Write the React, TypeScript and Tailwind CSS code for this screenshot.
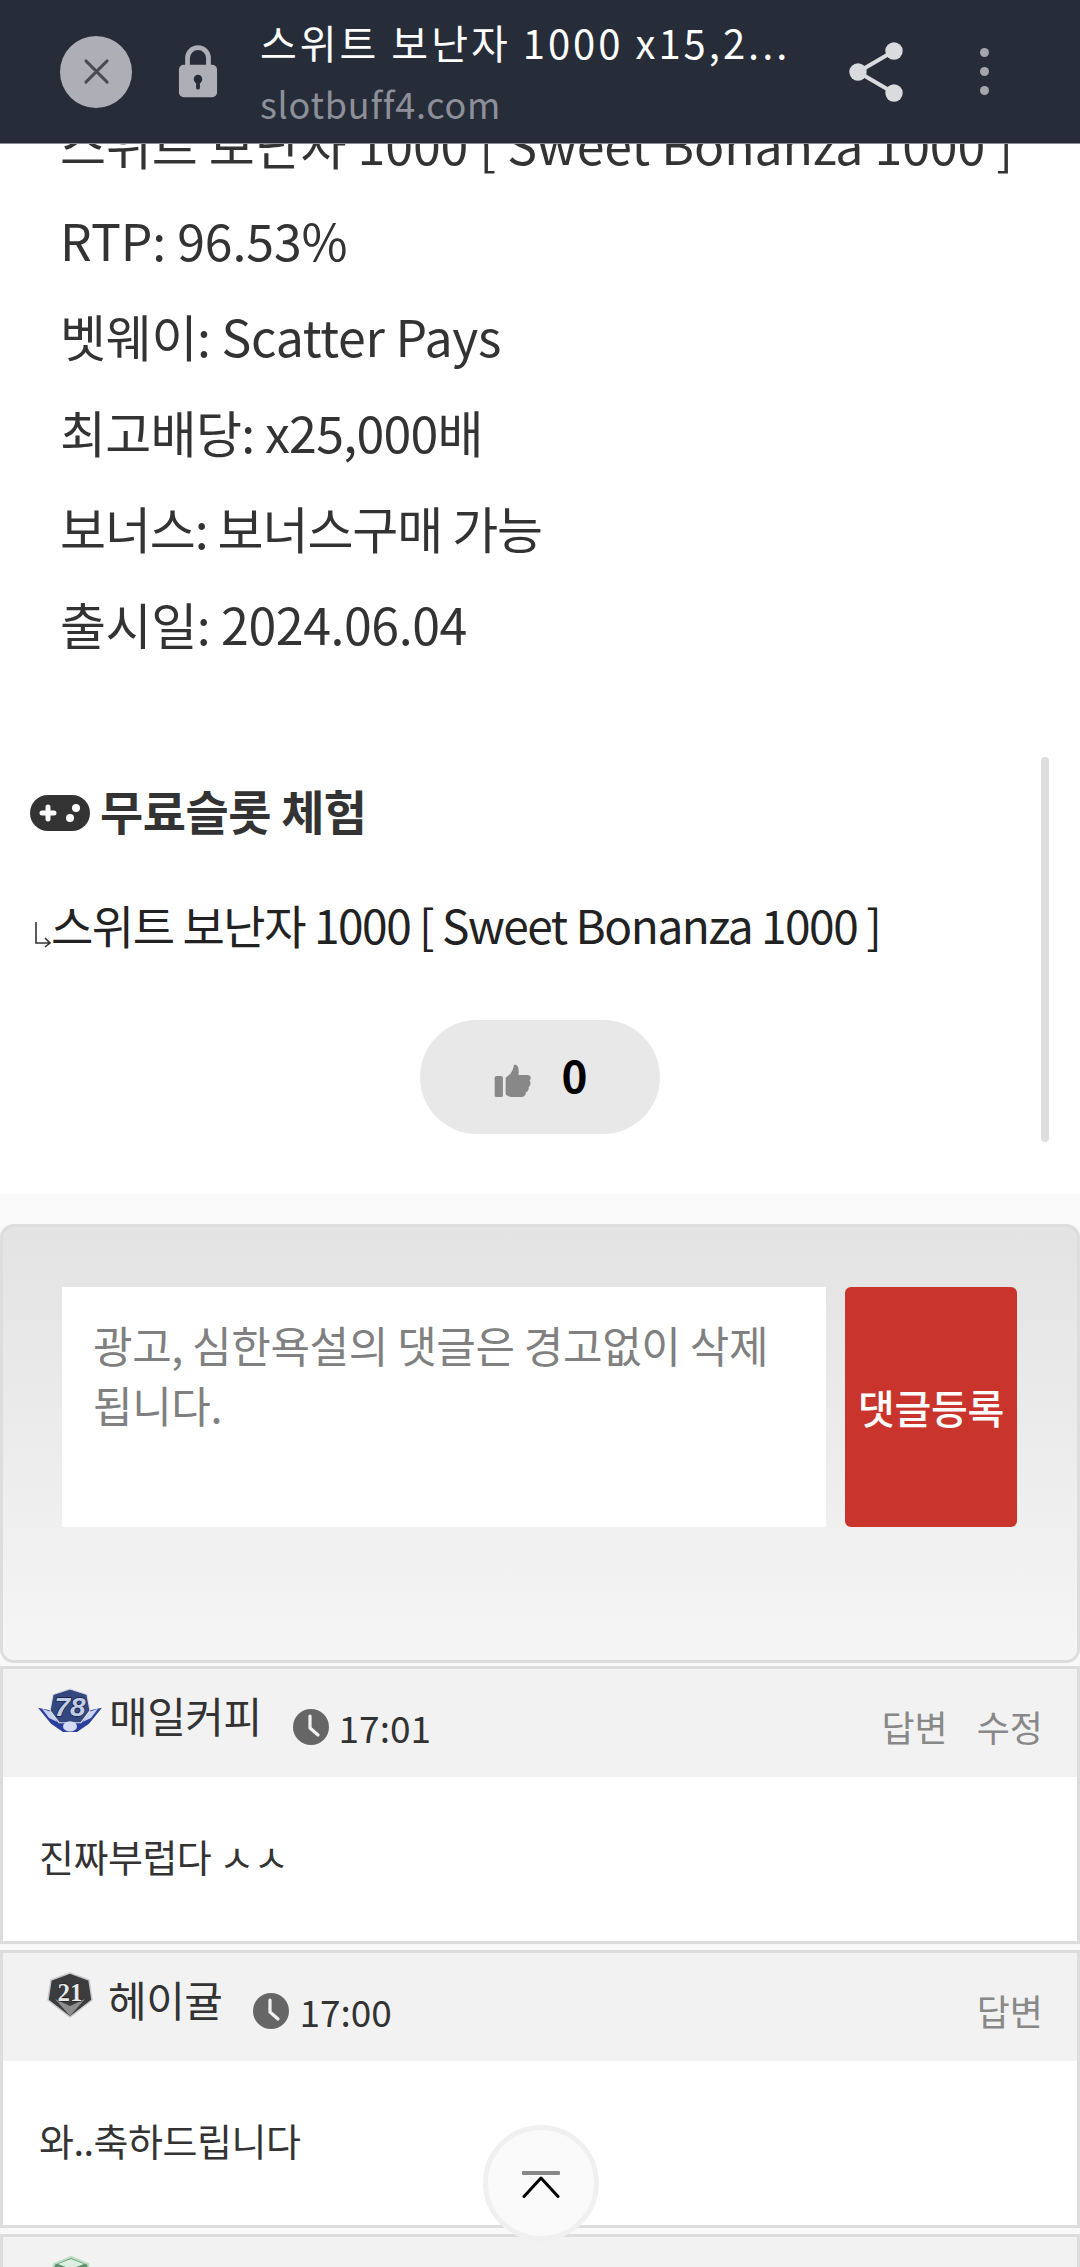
import React from "react";

const KR = "font-['Noto_Sans_CJK_KR','Noto_Sans',sans-serif]";

function BlueBadge() {
  return (
    <svg width="66" height="45" viewBox="0 0 66 48" preserveAspectRatio="none" className="shrink-0">
      <path d="M1 21 L14 24 L20 16 L46 16 L52 24 L65 21 L52 38 L40 47 L26 47 L14 38 Z" fill="#2c3f9c" />
      <path d="M5 22 L16 26 L20 36 L12 32 Z" fill="#c6d2ef" />
      <path d="M61 22 L50 26 L46 36 L54 32 Z" fill="#c6d2ef" />
      <path d="M33 1 L50 7 L53 24 L44 37 L22 37 L13 24 L16 7 Z" fill="#34487f" stroke="#d8dce6" strokeWidth="1.2" />
      <ellipse cx="33" cy="41" rx="7" ry="5.5" fill="#d5dcf5" />
      <text x="33" y="30" textAnchor="middle" fontSize="28" fontWeight="700" fontStyle="italic" fill="#c0cde8" stroke="#141c3a" strokeWidth="1.4" paintOrder="stroke" fontFamily="'Liberation Sans',sans-serif">78</text>
    </svg>
  );
}

function DarkBadge() {
  return (
    <svg width="46" height="46" viewBox="0 0 46 46" className="shrink-0">
      <path d="M23 1 L42 8 L45 28 L23 45 L1 28 L4 8 Z" fill="#3c3c3e" stroke="#c8c8c8" strokeWidth="1.5" />
      <path d="M23 34 L38 27 L23 44 L8 27 Z" fill="#8e8e8e" />
      <text x="23" y="29" textAnchor="middle" fontSize="25" fontWeight="700" fill="#e8e8e8" stroke="#1c1c1c" strokeWidth="1.2" paintOrder="stroke" fontFamily="'Liberation Serif',serif">21</text>
    </svg>
  );
}

function GreenBadge() {
  return (
    <svg width="42" height="46" viewBox="0 0 42 46" className="shrink-0">
      <path d="M21 1 L38 8 L41 28 L21 45 L1 28 L4 8 Z" fill="#5d8f6c" stroke="#b9dcc2" strokeWidth="2" />
      <path d="M21 3 L34 8 L21 13 L8 8 Z" fill="#dcefe1" />
    </svg>
  );
}

function Clock() {
  return (
    <svg width="36" height="36" viewBox="0 0 36 36" className="shrink-0">
      <circle cx="18" cy="18" r="18" fill="#666666" />
      <path d="M17 7 V19 L25 26" fill="none" stroke="#f2f2f2" strokeWidth="3.2" strokeLinecap="round" strokeLinejoin="round" />
    </svg>
  );
}

function Comment({
  name,
  time,
  body,
  badge,
  actions,
  badgeClass,
  nameClass,
}: {
  name: string;
  time: string;
  body: string;
  badge: React.ReactNode;
  actions: string[];
  badgeClass: string;
  nameClass: string;
}) {
  return (
    <div className="border-[3px] border-[#dddddd] bg-white mb-[6px]">
      <div className="h-[108px] bg-[#f2f2f2] flex items-start pl-[34px] pr-[34px]">
        <div className={badgeClass}>{badge}</div>
        <span className={`mt-[16px] mr-[31px] text-[42px] leading-[60px] text-[#333333] tracking-[-0.5px] ${nameClass}`}>{name}</span>
        <div className="flex items-center mt-[30px]">
          <Clock />
          <span className="ml-[10px] text-[37px] leading-[56px] text-[#333333]">{time}</span>
        </div>
        <div className="ml-auto flex gap-[29px] mt-[31px] text-[36px] leading-[52px] text-[#888888]">
          {actions.map((a) => (
            <span key={a}>{a}</span>
          ))}
        </div>
      </div>
      <div className="h-[164px] flex items-center pl-[36px] pb-[8px] text-[38px] text-[#333333] tracking-[-0.5px]">{body}</div>
    </div>
  );
}

export default function App() {
  return (
    <div className={`relative w-[1080px] h-[2267px] overflow-hidden bg-white ${KR}`}>
      <header className="absolute top-0 left-0 right-0 z-10 h-[144px] bg-[#272c39] border-b border-[#8a8d94] flex items-center pl-[60px] pr-[91px]">
        <div className="w-[72px] h-[72px] rounded-full bg-[#aeafb6] flex items-center justify-center shrink-0">
          <svg width="27" height="27" viewBox="0 0 28 28">
            <path d="M3 3 L25 25 M25 3 L3 25" stroke="#4a4b50" strokeWidth="3" strokeLinecap="round" />
          </svg>
        </div>
        <svg width="40" height="55" viewBox="0 0 42 56" className="ml-[46px] shrink-0">
          <path d="M10 24 V14 A11 11 0 0 1 32 14 V24" fill="none" stroke="#aeafb6" strokeWidth="5" />
          <path d="M6 21 H36 A5 5 0 0 1 41 26 V50 A5 5 0 0 1 36 55 H6 A5 5 0 0 1 1 50 V26 A5 5 0 0 1 6 21 Z" fill="#aeafb6" />
          <circle cx="21" cy="36" r="4.5" fill="#272c39" />
          <rect x="19" y="36" width="4" height="11" rx="2" fill="#272c39" />
        </svg>
        <div className="ml-[42px] flex flex-col w-[545px] -mt-[3px] shrink-0">
          <span className="block text-[40px] leading-[52px] tracking-[3px] text-white whitespace-nowrap">스위트 보난자 1000 x15,2...</span>
          <span className="block text-[36px] leading-[44px] tracking-[0.75px] mt-[13px] text-[#8d9099]">slotbuff4.com</span>
        </div>
        <svg width="54" height="60" viewBox="0 0 54 60" className="ml-auto shrink-0">
          <path d="M45 9 L9 30 L45 51" fill="none" stroke="#d9dbdf" strokeWidth="4" />
          <circle cx="45" cy="9" r="8.7" fill="#d9dbdf" />
          <circle cx="9" cy="30" r="8.7" fill="#d9dbdf" />
          <circle cx="45" cy="51" r="8.7" fill="#d9dbdf" />
        </svg>
        <div className="ml-[77px] flex flex-col gap-[10px] shrink-0">
          <span className="w-[9px] h-[9px] rounded-full bg-[#a4a6ad]" />
          <span className="w-[9px] h-[9px] rounded-full bg-[#a4a6ad]" />
          <span className="w-[9px] h-[9px] rounded-full bg-[#a4a6ad]" />
        </div>
      </header>

      <main className="pt-[95px]">
        <section className="pl-[60px] text-[50px] leading-[96px] text-[#333333] tracking-[-0.1px]">
          <p className="whitespace-nowrap">스위트 보난자 1000 [ Sweet Bonanza 1000 ]</p>
          <p>RTP: 96.53%</p>
          <p className="tracking-[-0.3px]">벳웨이: Scatter Pays</p>
          <p className="tracking-[-0.7px]">최고배당: x25,000배</p>
          <p className="tracking-[-1.1px]">보너스: 보너스구매 가능</p>
          <p className="tracking-[-0.4px]">출시일: 2024.06.04</p>
        </section>

        <section className="relative h-[523px] pt-[112px]">
          <div className="absolute right-[31px] top-[86px] w-[8px] h-[385px] rounded-full bg-[#dedede]" />
          <div className="flex items-center pl-[30px] h-[60px]">
            <svg width="60" height="36" viewBox="0 0 60 36">
              <rect width="60" height="36" rx="18" fill="#333333" />
              <path d="M18 12 V24 M12 18 H24" stroke="#fff" strokeWidth="5" strokeLinecap="round" />
              <circle cx="46" cy="13" r="4" fill="#fff" />
              <circle cx="40" cy="23" r="4" fill="#fff" />
            </svg>
            <h2 className="ml-[10px] -mt-[6px] text-[47px] font-bold text-[#333333] tracking-[-0.5px]">무료슬롯 체험</h2>
          </div>
          <div className="flex items-center pl-[34px] mt-[54px] h-[60px] text-[46px] text-[#222222] tracking-[-1.45px] whitespace-nowrap">
            <svg width="18" height="27" viewBox="0 0 18 27" className="mt-[14px] shrink-0">
              <path d="M2 1 V22 H16 M11 17 L16 22 L11 26" fill="none" stroke="#333" strokeWidth="1.6" />
            </svg>
            <span className="-ml-[1px] -mt-[6px]">스위트 보난자 1000 [ Sweet Bonanza 1000 ]</span>
          </div>
          <div className="mt-[63px] mx-auto w-[240px] h-[114px] rounded-[57px] bg-[#e8e8e8] flex items-center justify-center gap-[29px]">
            <svg width="40" height="33" viewBox="0 0 40 36" className="mt-[6px]">
              <rect x="0" y="13" width="9" height="23" rx="2" fill="#888888" />
              <path d="M12 15 C18 11 20 7 21 1 C25 0 27 4 26 12 H36 C40 12 40 17 38 18 C40 20 39 24 37 25 C38 28 36 30 34 31 C34 34 32 36 29 36 H19 C15 36 13 34 12 33 Z" fill="#888888" />
            </svg>
            <span className="text-[44px] font-semibold text-black -mt-[6px]">0</span>
          </div>
        </section>

        <section className="bg-[#f9f9f9] pt-[30px]">
          <div className="h-[439px] border-[3px] border-[#dddddd] rounded-[14px] bg-gradient-to-b from-[#e3e3e3] to-[#f5f5f5] mb-[3px] pl-[59px] pr-[60px] pt-[60px] flex items-start gap-[19px]">
            <div className="w-[764px] h-[240px] bg-white px-[31px] pt-[27px] text-[43px] leading-[60px] text-[#808080] tracking-[-0.4px]">
              광고, 심한욕설의 댓글은 경고없이 삭제 됩니다.
            </div>
            <div className="flex-1 h-[240px] rounded-[6px] bg-[#c9352c] flex items-center justify-center text-[40px] font-medium text-white tracking-[-0.3px]">
              댓글등록
            </div>
          </div>

          <Comment name="매일커피" time="17:01" body="진짜부럽다 ㅅㅅ" actions={["답변", "수정"]} badgeClass="mt-[19px]" nameClass="ml-[6px]" badge={<BlueBadge />} />
          <Comment name="헤이귤" time="17:00" body="와..축하드립니다" actions={["답변"]} badgeClass="mt-[19px] ml-[10px]" nameClass="ml-[15px]" badge={<DarkBadge />} />
          <div className="border-[3px] border-[#dddddd] bg-[#f2f2f2] h-[60px] pl-[47px] pt-[19px]">
            <GreenBadge />
          </div>
        </section>
      </main>

      <button className="absolute left-[483px] top-[2125px] w-[116px] h-[116px] rounded-full bg-[#fafafa] border-[5px] border-[#f0f0f0] flex flex-col items-center justify-center">
        <svg width="38" height="27" viewBox="0 0 38 27" className="mt-[3px]">
          <rect x="0" y="0" width="38" height="4" rx="1" fill="#888888" />
          <path d="M2 25.5 L19 7 L36 25.5" fill="none" stroke="#000" strokeWidth="3" strokeLinecap="round" strokeLinejoin="round" />
        </svg>
      </button>
    </div>
  );
}
